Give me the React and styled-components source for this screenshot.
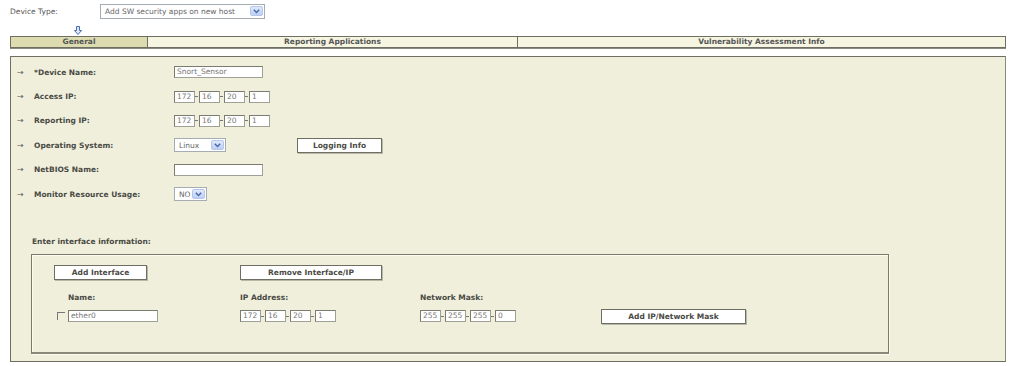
import React from 'react';
import styled, { createGlobalStyle } from 'styled-components';

const GlobalStyle = createGlobalStyle`
  body {
    margin: 0;
    background: #ffffff;
    font-family: "DejaVu Sans", Verdana, sans-serif;
    font-size: 7.5px;
    color: #4a4a44;
  }
`;

const Page = styled.div`
  width: 1024px;
  height: 366px;
  overflow: hidden;
`;

const TopRow = styled.div`
  display: flex;
  align-items: center;
  height: 16px;
  padding: 3px 0 0 10px;
`;

const TopLabel = styled.span`
  width: 90px;
  color: #555;
`;

const FakeSelect = styled.div`
  display: flex;
  align-items: center;
  justify-content: space-between;
  box-sizing: border-box;
  width: ${(p) => p.w}px;
  height: ${(p) => p.h || 14}px;
  background: #fff;
  border: 1px solid #a5acb2;
  padding: 0 1px 0 4px;
  color: #666;
`;

const SelectArrow = styled.span`
  display: flex;
  align-items: center;
  justify-content: center;
  width: 13px;
  height: ${(p) => p.h || 10}px;
  background: linear-gradient(#dfe9fb, #bccff3);
  border: 1px solid #b4c6ec;
  border-radius: 2px;
  box-sizing: border-box;
`;

const ArrowRow = styled.div`
  width: 136px;
  margin-left: 10px;
  height: 16px;
  display: flex;
  justify-content: center;
  align-items: flex-end;
`;

const Tabs = styled.div`
  display: grid;
  grid-template-columns: 136px 370px 1fr;
  margin: 1px 18px 0 10px;
  border: 1px solid #6e6e62;
  box-shadow: 0 1px 0 #8a8a7c;
`;

const Tab = styled.div`
  height: 10px;
  line-height: 10px;
  text-align: center;
  font-weight: bold;
  color: #555;
  background: ${(p) => (p.active ? '#dcdcb0' : '#f5f5e2')};
  border-left: ${(p) => (p.first ? 'none' : '1px solid #6e6e62')};
`;

const Panel = styled.div`
  margin: 8px 18px 0 10px;
  height: 306px;
  box-sizing: border-box;
  border: 1px solid #6e6e62;
  border-right-color: #8a8a7c;
  background: #efefdc;
  padding: 3px 0 0 0;
`;

const FieldRow = styled.div`
  display: flex;
  align-items: center;
  height: 24.4px;
`;

const Bullet = styled.span`
  width: 17px;
  padding-left: 6px;
  font-size: 8px;
  color: #555;
`;

const Label = styled.span`
  width: 140px;
  font-weight: bold;
  color: #4a4a44;
`;

const TextBox = styled.div`
  box-sizing: border-box;
  width: ${(p) => p.w}px;
  height: 12px;
  line-height: 10px;
  background: #fff;
  border: 1px solid #7b7b70;
  border-right-color: #a0a094;
  border-bottom-color: #a0a094;
  padding-left: 2px;
  color: #777;
`;

const IpGroup = styled.div`
  display: flex;
  align-items: center;
`;

const Dot = styled.span`
  width: 3px;
  height: 1px;
  margin: 0 1px 0 0;
  background: #777;
`;

const Button = styled.div`
  box-sizing: border-box;
  width: ${(p) => p.w}px;
  height: 15px;
  line-height: 13px;
  text-align: center;
  font-weight: bold;
  color: #4a4a44;
  background: #fff;
  border: 1px solid #6e6e62;
  box-shadow: 1px 1px 0 #b8b8a8;
  margin-left: ${(p) => p.ml || 0}px;
`;

const SectionTitle = styled.div`
  margin: 31px 0 0 21px;
  font-weight: bold;
  color: #4a4a44;
`;

const InterfaceBox = styled.div`
  margin: 8px 0 0 20px;
  width: 858px;
  height: 100px;
  box-sizing: border-box;
  border: 1px solid #7a7a6c;
  box-shadow: inset 1px 1px 0 #fbfbf0, 1px 1px 0 #fbfbf0;
  border-bottom: 2px solid #8a8a7a;
  padding: 9px 0 0 22px;
  display: grid;
  grid-template-columns: 186px 180px 181px auto;
  grid-template-rows: 16px 30px 12px;
  align-items: center;
`;

const ColLabel = styled.div`
  font-weight: bold;
  color: #4a4a44;
  padding-left: ${(p) => p.pl || 0}px;
  align-self: end;
  padding-bottom: 8px;
`;

const CheckRow = styled.div`
  display: flex;
  align-items: center;
  padding-left: 3px;
`;

const Check = styled.span`
  width: 7px;
  height: 7px;
  border-top: 1px solid #777;
  border-left: 1px solid #777;
  margin-right: 3px;
`;

const Chevron = () => (
  <svg width="7" height="5" viewBox="0 0 7 5">
    <path d="M0.8 0.8 L3.5 3.6 L6.2 0.8" fill="none" stroke="#4a68a8" strokeWidth="1.4" />
  </svg>
);

const DownArrow = () => (
  <svg width="8" height="9" viewBox="0 0 8 9">
    <path d="M2.5 0.5 H5.5 V4.5 H7.5 L4 8.5 L0.5 4.5 H2.5 Z" fill="#dfe8f8" stroke="#4a6fb8" strokeWidth="1" />
  </svg>
);

const Select = ({ w, h, children }) => (
  <FakeSelect w={w} h={h}>
    <span>{children}</span>
    <SelectArrow>
      <Chevron />
    </SelectArrow>
  </FakeSelect>
);

const IpInput = ({ parts }) => (
  <IpGroup>
    {parts.map((v, i) => (
      <React.Fragment key={i}>
        {i > 0 && <Dot />}
        <TextBox w={i === 3 ? 21 : 21}>{v}</TextBox>
      </React.Fragment>
    ))}
  </IpGroup>
);

const Field = ({ label, children }) => (
  <FieldRow>
    <Bullet>→</Bullet>
    <Label>{label}</Label>
    {children}
  </FieldRow>
);

export default function App() {
  return (
    <Page>
      <GlobalStyle />
      <TopRow>
        <TopLabel>Device Type:</TopLabel>
        <Select w={165} h={15}>Add SW security apps on new host</Select>
      </TopRow>
      <ArrowRow>
        <DownArrow />
      </ArrowRow>
      <Tabs>
        <Tab active first>General</Tab>
        <Tab>Reporting Applications</Tab>
        <Tab>Vulnerability Assessment Info</Tab>
      </Tabs>
      <Panel>
        <Field label="*Device Name:">
          <TextBox w={89}>Snort_Sensor</TextBox>
        </Field>
        <Field label="Access IP:">
          <IpInput parts={['172', '16', '20', '1']} />
        </Field>
        <Field label="Reporting IP:">
          <IpInput parts={['172', '16', '20', '1']} />
        </Field>
        <Field label="Operating System:">
          <Select w={52} h={14}>Linux</Select>
          <Button w={85} ml={71}>Logging Info</Button>
        </Field>
        <Field label="NetBIOS Name:">
          <TextBox w={89} />
        </Field>
        <Field label="Monitor Resource Usage:">
          <Select w={33} h={14}>NO</Select>
        </Field>
        <SectionTitle>Enter interface information:</SectionTitle>
        <InterfaceBox>
          <Button w={93}>Add Interface</Button>
          <Button w={142}>Remove Interface/IP</Button>
          <div />
          <div />
          <ColLabel pl={14}>Name:</ColLabel>
          <ColLabel>IP Address:</ColLabel>
          <ColLabel>Network Mask:</ColLabel>
          <div />
          <CheckRow>
            <Check />
            <TextBox w={90}>ether0</TextBox>
          </CheckRow>
          <IpInput parts={['172', '16', '20', '1']} />
          <IpInput parts={['255', '255', '255', '0']} />
          <Button w={145}>Add IP/Network Mask</Button>
        </InterfaceBox>
      </Panel>
    </Page>
  );
}
